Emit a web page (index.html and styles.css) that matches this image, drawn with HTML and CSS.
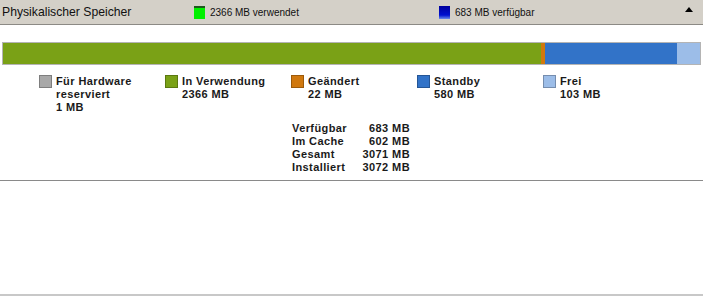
FILE: index.html
```html
<!DOCTYPE html>
<html lang="de">
<head>
  <meta charset="UTF-8" />
  <title>Physikalischer Speicher</title>
  <link rel="stylesheet" href="styles.css">
</head>
<body>
  <header class="section-head">
    <span class="head-title">Physikalischer Speicher</span>
    <span class="head-chip chip-used"><i class="chip-box box-used"></i>2366 MB verwendet</span>
    <span class="head-chip chip-free"><i class="chip-box box-avail"></i>683 MB verfügbar</span>
    <span class="collapse"></span>
  </header>

  <main class="panel">
    <div class="membar">
      <div class="seg seg-inuse" style="width:538px"></div>
      <div class="seg seg-mod" style="width:4px"></div>
      <div class="seg seg-standby" style="width:132px"></div>
      <div class="seg seg-free" style="width:23px"></div>
    </div>

    <ul class="legend">
      <li><i class="swatch sw-hw"></i><span>Für Hardware<br>reserviert<br>1 MB</span></li>
      <li><i class="swatch sw-inuse"></i><span>In Verwendung<br>2366 MB</span></li>
      <li><i class="swatch sw-mod"></i><span>Geändert<br>22 MB</span></li>
      <li><i class="swatch sw-standby"></i><span>Standby<br>580 MB</span></li>
      <li><i class="swatch sw-free"></i><span>Frei<br>103 MB</span></li>
    </ul>

    <dl class="stats">
      <dt>Verfügbar</dt><dd>683 MB</dd>
      <dt>Im Cache</dt><dd>602 MB</dd>
      <dt>Gesamt</dt><dd>3071 MB</dd>
      <dt>Installiert</dt><dd>3072 MB</dd>
    </dl>
  </main>

  <div class="blank"></div>
</body>
</html>
```

FILE: styles.css
```css
body {
  margin: 0;
  width: 703px;
  height: 298px;
  background: #fff;
  font-family: "Liberation Sans", Arial, sans-serif;
  color: #000;
  overflow: hidden;
}
.section-head {
  display: flex;
  align-items: center;
  height: 24px;
  background: #d4d0c8;
  border-bottom: 1px solid #8c8a85;
}
.head-title {
  width: 192px;
  padding-left: 2px;
  font-size: 12.2px;
  color: #111;
}
.head-chip {
  display: flex;
  align-items: center;
  font-size: 10px;
  color: #111;
}
.chip-used {
  width: 245px;
}
.chip-free {
  flex: 1;
}
.chip-box {
  display: block;
  width: 11px;
  height: 13px;
  margin-right: 5px;
  box-sizing: border-box;
}
.box-used {
  background: #00f000;
  border-top: 2px solid #1c5a1c;
}
.box-avail {
  background: linear-gradient(to bottom, #00009c 0%, #0010d0 70%, #6c8ce8 100%);
}
.collapse {
  width: 0;
  height: 0;
  margin-right: 10px;
  margin-top: -6px;
  border-left: 4.5px solid transparent;
  border-right: 4.5px solid transparent;
  border-bottom: 5px solid #000;
}
.panel {
  height: 156px;
  padding-top: 17px;
  box-sizing: border-box;
  border-bottom: 1px solid #8a8a8a;
}
.membar {
  display: flex;
  height: 23px;
  margin: 0 2px 0 2px;
  border: 1px solid #b4b4b4;
  box-sizing: border-box;
}
.seg {
  height: 100%;
}
.seg-inuse { background: #7aa116; }
.seg-mod { background: #d0780e; }
.seg-standby { background: #3273c8; }
.seg-free { background: #9cbde8; flex: 1; }

.legend {
  display: flex;
  list-style: none;
  margin: 10px 0 0 39px;
  padding: 0;
}
.legend li {
  display: flex;
  width: 126px;
  font-size: 11px;
  font-weight: bold;
  line-height: 13px;
  letter-spacing: 0.4px;
  color: #1a1a1a;
}
.swatch {
  display: block;
  width: 13px;
  height: 13px;
  margin-right: 4px;
  box-sizing: border-box;
  border: 1px solid rgba(0, 0, 0, 0.25);
}
.sw-hw { background: #a8a8a8; }
.sw-inuse { background: #7aa116; }
.sw-mod { background: #d0780e; }
.sw-standby { background: #3273c8; }
.sw-free { background: #9cbde8; }

.stats {
  display: grid;
  grid-template-columns: 62px 56px;
  margin: 8px 0 0 292px;
  font-size: 11px;
  font-weight: bold;
  line-height: 13px;
  letter-spacing: 0.4px;
  white-space: nowrap;
  color: #1a1a1a;
}
.stats dt, .stats dd {
  margin: 0;
}
.stats dd {
  text-align: right;
}
.blank {
  height: 113px;
  border-bottom: 2px solid #c8c8c8;
}
```
